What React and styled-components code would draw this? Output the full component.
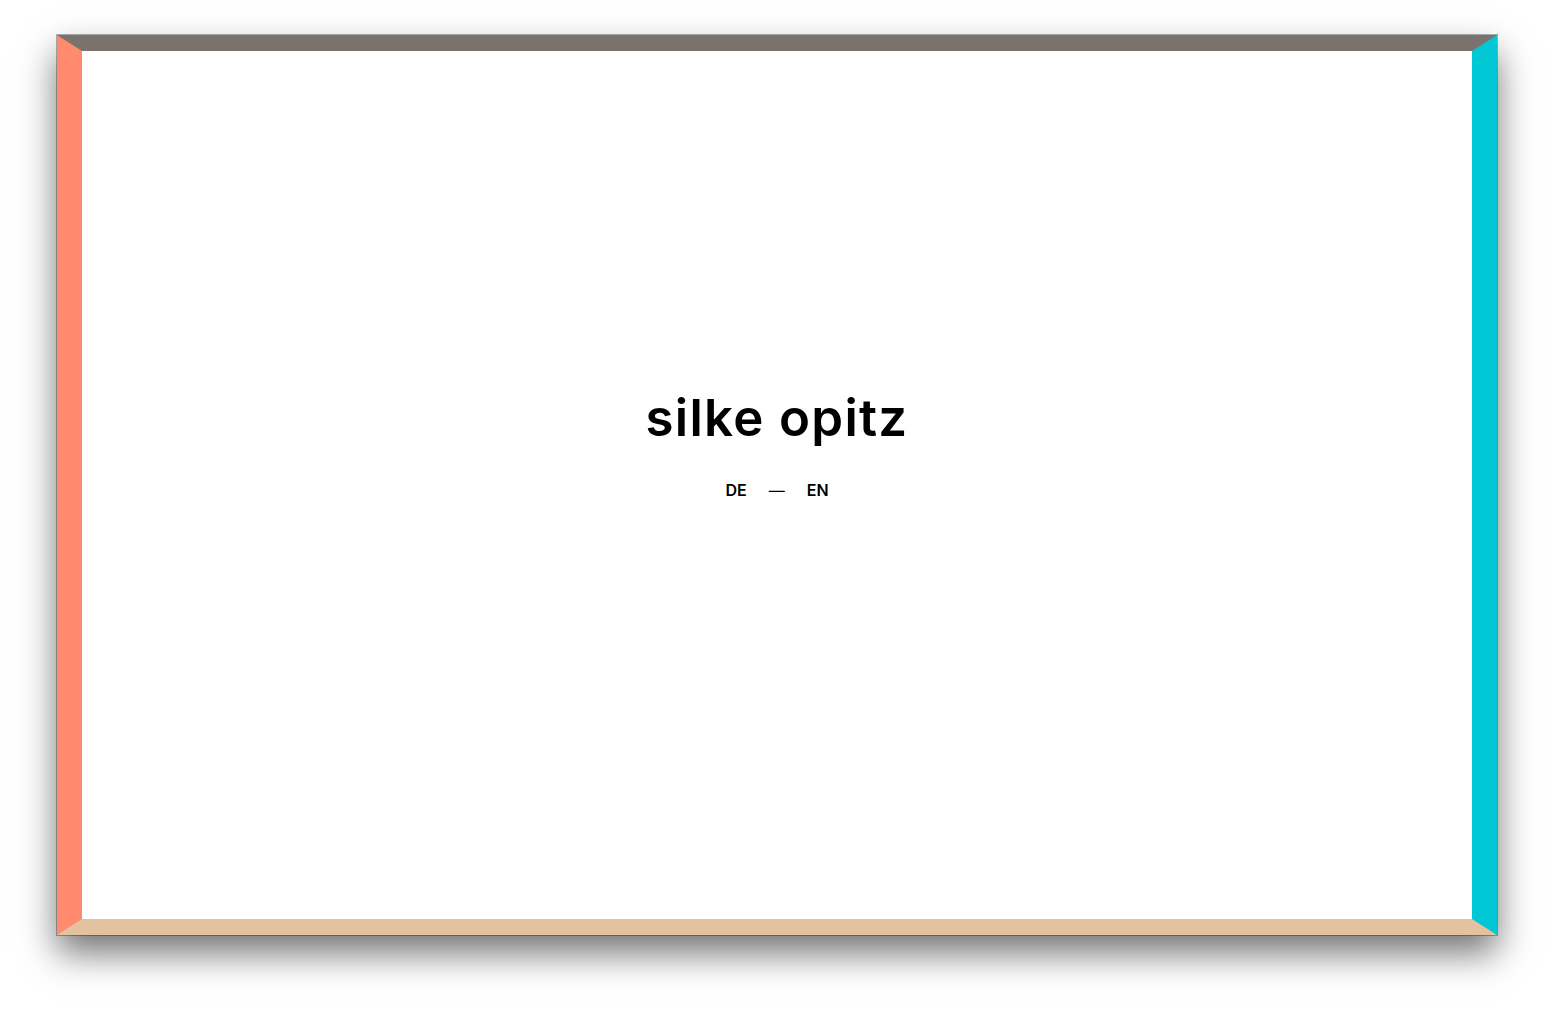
import React from "react";
import styled, { createGlobalStyle } from "styled-components";

const GlobalStyle = createGlobalStyle`
  html, body {
    margin: 0;
    padding: 0;
    background: #ffffff;
  }
  body {
    font-family: "Inter", "Noto Sans", sans-serif;
    color: #000;
  }
`;

function App() {
  return (
    <>
      <GlobalStyle />
      <Page>
        {/* the coloured frame: each side its own border colour, the corners mitre by themselves */}
        <Frame>
          <Intro>
            <Name>silke opitz</Name>
            <Languages>
              <Lang href="#de">DE</Lang>
              <Dash>—</Dash>
              <Lang href="#en">EN</Lang>
            </Languages>
          </Intro>
        </Frame>
      </Page>
    </>
  );
}

export default App;

const Page = styled.div`
  display: flex;
  box-sizing: border-box;
  height: 1014px;
  padding: 35px 57px 79px 57px;
`;

const Frame = styled.div`
  flex: 1;
  display: flex;
  align-items: center;
  justify-content: center;
  background: #ffffff;
  border-style: solid;
  border-width: 16px 25px 16px 25px;
  border-color: #79726d #00c7d3 #e2c2a0 #ff8a6d;
  box-shadow: 0 0 0 1px rgba(0, 0, 0, 0.3), 0 18px 34px rgba(0, 0, 0, 0.55);
`;

const Intro = styled.div`
  display: flex;
  flex-direction: column;
  align-items: center;
  margin-top: -78px;
`;

const Name = styled.h1`
  margin: 0;
  font-size: 51px;
  font-weight: 600;
  letter-spacing: 1.3px;
  line-height: 1;
`;

const Languages = styled.nav`
  display: flex;
  align-items: center;
  gap: 22px;
  margin-top: 37px;
  font-size: 16px;
  font-weight: 600;
`;

const Lang = styled.a`
  color: #000;
  text-decoration: none;
`;

const Dash = styled.span`
  font-weight: 400;
`;
